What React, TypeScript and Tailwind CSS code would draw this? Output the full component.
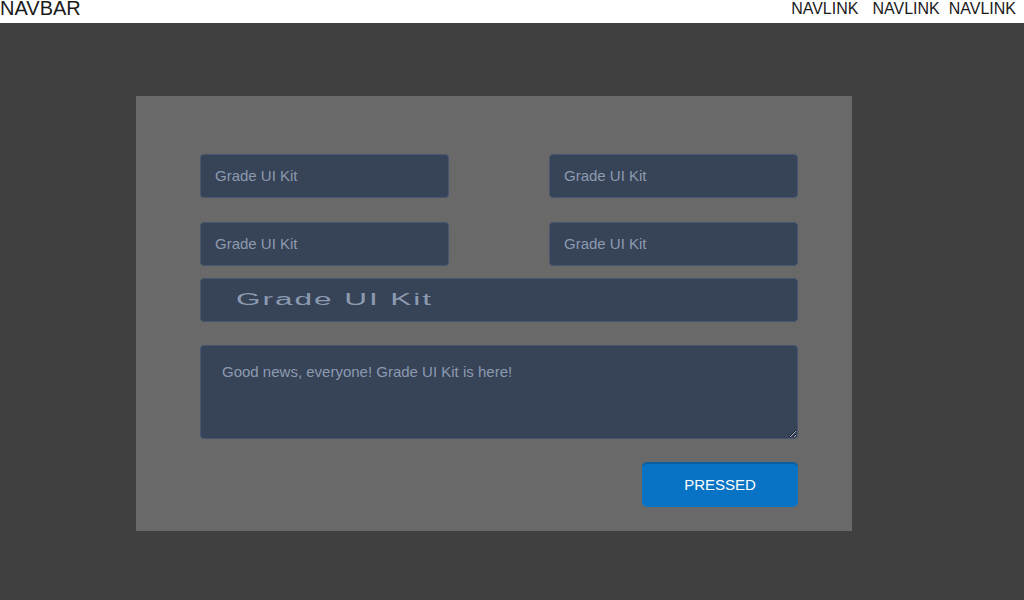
import React from "react";

export default function App() {
  const inputCls =
    "h-[44px] w-[249px] rounded-[4px] border border-[#46566f] bg-[#374357] px-[14px] pb-[1px] text-[15px] text-[#8c9ab0] placeholder:text-[#8c9ab0] outline-none";
  return (
    <div className="min-h-[600px] w-[1024px] bg-[#404040]" style={{ fontFamily: '"Liberation Sans", Arial, sans-serif' }}>
      <nav className="flex h-[23px] items-start justify-between bg-white text-[#1a1a1a]">
        <span className="text-[20px] leading-[17px]">NAVBAR</span>
        <div className="flex pt-[1px] text-[16px] leading-[16px]">
          <span>NAVLINK</span>
          <span className="ml-[14px]">NAVLINK</span>
          <span className="ml-[9px] mr-[8px]">NAVLINK</span>
        </div>
      </nav>
      <div className="flex justify-start pl-[136px] pt-[73px]">
        <div className="w-[716px] h-[435px] bg-[#696969] pl-[64px] pr-[54px] pt-[58px]">
          <div className="flex justify-between">
            <input className={inputCls} placeholder="Grade UI Kit" />
            <input className={inputCls} placeholder="Grade UI Kit" />
          </div>
          <div className="mt-[24px] flex justify-between">
            <input className={inputCls} placeholder="Grade UI Kit" />
            <input className={inputCls} placeholder="Grade UI Kit" />
          </div>
          <div className="mt-[12px] flex h-[44px] w-full items-center overflow-hidden rounded-[4px] border border-[#46566f] bg-[#374357] pl-[35px]">
            <span className="origin-left scale-x-[1.97] text-[16px] tracking-[1px] text-[#8c9ab0] whitespace-nowrap">Grade UI Kit</span>
          </div>
          <textarea
            className="mt-[23px] block h-[94px] w-full rounded-[4px] border border-[#46566f] bg-[#374357] px-[21px] pt-[15px] text-[15px] text-[#8c9ab0] placeholder:text-[#8c9ab0] outline-none"
            placeholder="Good news, everyone! Grade UI Kit is here!"
          />
          <div className="mt-[23px] flex justify-end">
            <button className="h-[45px] w-[156px] rounded-[5px] border-t-2 border-[#0a5fa0] bg-[#0873c4] text-[15px] text-white">
              PRESSED
            </button>
          </div>
        </div>
      </div>
    </div>
  );
}
